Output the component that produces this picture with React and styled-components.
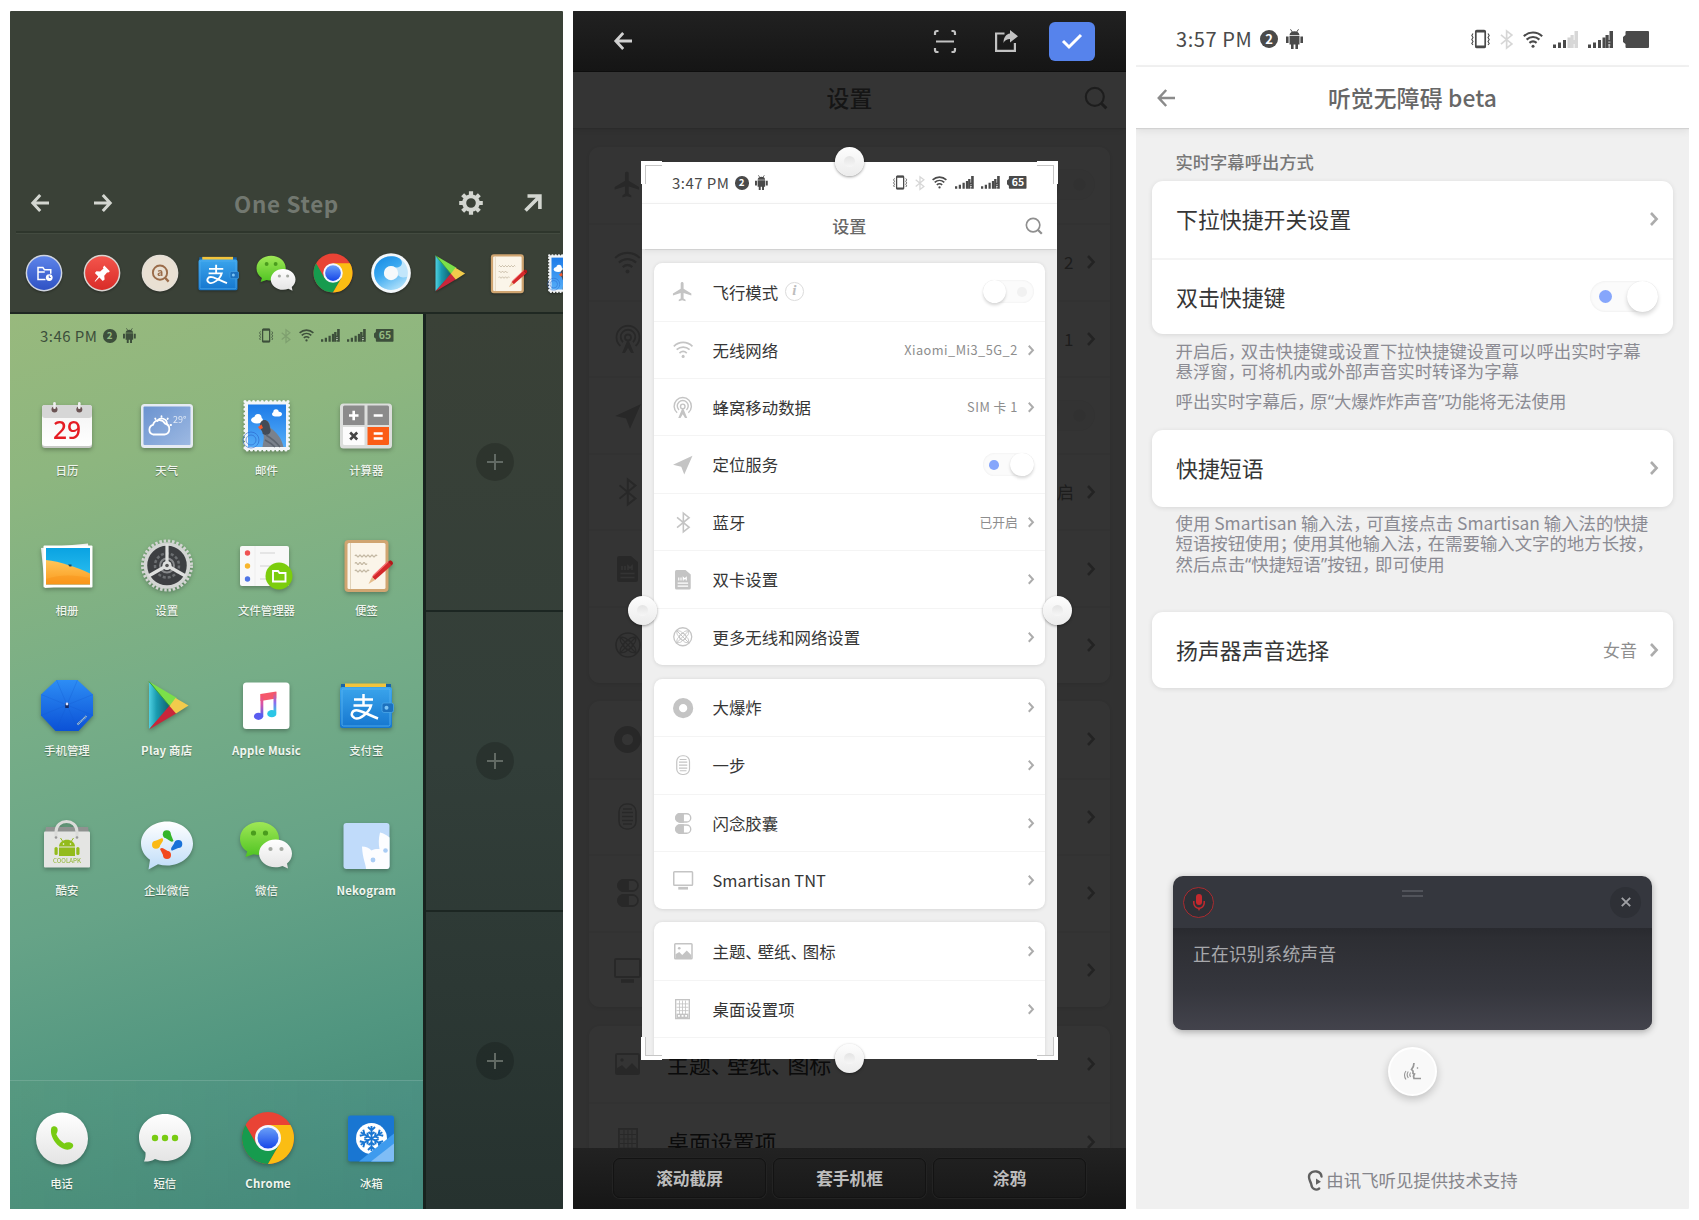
import React from "react";
import styled, { createGlobalStyle, css } from "styled-components";
import { MdFlight } from "react-icons/md";

const Global = createGlobalStyle`
  * { box-sizing: border-box; }
  body { margin: 0; background: #fff; }
  #root { font-family: "Noto Sans CJK SC", "Noto Sans", sans-serif; }
  svg { display: block; flex: none; overflow: visible; }
`;

const Board = styled.main`
  width: 1699px;
  height: 1220px;
  padding: 11px 10px;
  display: flex;
  gap: 10px;
  background: #fff;
  overflow: hidden;
`;

const Phone = styled.section`
  position: relative;
  width: 553px;
  height: 1198px;
  flex: none;
  display: flex;
  flex-direction: column;
  overflow: hidden;
  border-radius: 1px;
  background: ${(p) => p.$bg};
`;

/* ---------- shared text helpers ---------- */

const Tight = styled.span`
  margin-right: -0.25em;
`;
const Quote = styled.span`
  font-family: "Noto Sans", sans-serif;
`;

function Zh({ children }) {
  return children.split(/([，；、“”])/).map((part, i) => {
    if (/^[，；、]$/.test(part)) return <Tight key={i}>{part}</Tight>;
    if (/^[“”]$/.test(part)) return <Quote key={i}>{part}</Quote>;
    return part;
  });
}

/* ---------- status bar ---------- */

const Status = styled.div`
  height: 56px;
  flex: none;
  zoom: ${(p) => p.$zoom || 1};
  display: flex;
  align-items: center;
  padding: 2px 40px 0 40px;
  color: ${(p) => p.$color || "#4a4a4a"};
  ${(p) => p.$line && css`border-bottom: 2px solid #f2f2f2;`}
`;
const Clock = styled.span`
  font-size: 20px;
  line-height: 26px;
  letter-spacing: 0.6px;
  white-space: nowrap;
  width: 84px;
`;
const Count = styled.span`
  width: 18px;
  height: 18px;
  border-radius: 50%;
  background: currentColor;
  display: grid;
  place-items: center;
  margin-right: 8px;
  b {
    font-size: 13px;
    line-height: 18px;
    color: ${(p) => p.$hole || "#fff"};
  }
`;
const Tray = styled.div`
  margin-left: auto;
  display: flex;
  align-items: center;
  gap: 10px;
`;

const Robot = () => (
  <svg width="17" height="20" viewBox="0 0 17 20" fill="currentColor">
    <path d="M3.500 6.200C3.700 1 13.300 1 13.500 6.200zM3.500 7h10v8.500h-10zM0 7.500h2.600V14H0zM14.400 7.500H17V14h-2.600zM5 15h2.600v5H5zM9.400 15H12v5H9.400z" />
    <path d="M4.500.3l2 3M12.500.3l-2 3" stroke="currentColor" />
  </svg>
);
const Vibrate = () => (
  <svg width="19" height="20" viewBox="0 0 19 20" fill="none" stroke="currentColor">
    <rect x="4.800" y="1.500" width="9.400" height="17" rx="1" strokeWidth="1.700" />
    <path d="M5 2.300h9M5 17.700h9" strokeWidth="2.400" />
    <path d="M2 4.500l-1.200 2 1.200 2-1.200 2 1.200 2-1.200 2 1.200 1.500M17 4.500l1.200 2-1.200 2 1.200 2-1.200 2 1.200 2-1.200 1.500" strokeWidth="1.100" />
  </svg>
);
const Bluetooth = ({ size = 18, color = "currentColor", opacity = 1, w = 1.8 }) => (
  <svg width={size * 0.7} height={size} viewBox="0 0 14 20" fill="none" stroke={color} strokeWidth={w} opacity={opacity}>
    <path d="M1 5.2l11.500 9.400L7 19V1l5.500 4.400L1 14.800" />
  </svg>
);
const Wifi = ({ size = 20, w = 2.1 }) => (
  <svg width={size} height={size * 0.85} viewBox="0 0 20 17" fill="none" stroke="currentColor" strokeWidth={w}>
    <path d="M.8 5.200c5.400-5 13-5 18.400 0M3.600 8.600c3.800-3.400 9-3.400 12.800 0M6.400 11.900c2.200-1.900 5-1.900 7.200 0" />
    <circle cx="10" cy="15.200" r="1.500" fill="currentColor" stroke="none" />
  </svg>
);
const Signal = ({ weak }) => (
  <svg width="25" height="17" viewBox="0 0 25 17" fill="currentColor">
    <path d="M0 13.500h3V17H0zM5 11.500h3V17H5zM10 9h3v8h-3z" />
    <path d="M14.500 6.500h3V17h-3z" opacity={weak ? 0.25 : 1} />
    <g opacity={weak ? 0.22 : 1}>
      <path d="M17.500 4h3.200v13h-3.200zM21.500 0H25v17h-3.500zM20 9h3v4h-3z" />
    </g>
    {!weak && <path d="M20.200 10.500h2.200v1.200h-2.200zM20.200 13.400h2.200v1.200h-2.200z" fill="#fff" opacity=".6" />}
  </svg>
);
const Battery = ({ level, hole }) => (
  <svg width="26" height="17" viewBox="0 0 26 17" fill="currentColor">
    <path d="M3.500 0H25q1 0 1 1v15q0 1-1 1H3.500q-1 0-1-1v-3L0 11V6l2.500-2V1q0-1 1-1z" />
    {level && (
      <text x="14.600" y="13.600" fontSize="14" fontWeight="700" textAnchor="middle" fill={hole}>{level}</text>
    )}
  </svg>
);

function StatusBar({ time, level, color, hole = "#fff", zoom, line, weak }) {
  return (
    <Status $color={color} $zoom={zoom} $line={line}>
      <Clock>{time}</Clock>
      <Count $hole={hole}><b>2</b></Count>
      <Robot />
      <Tray>
        <Vibrate />
        <Bluetooth opacity={0.22} size={19} />
        <Wifi />
        <Signal weak={weak} />
        <Signal />
        <Battery level={level} hole={hole} />
      </Tray>
    </Status>
  );
}

/* ---------- small glyphs ---------- */

const Arrow = ({ color, flip, size = 18, w = 3 }) => (
  <svg width={size} height={size} viewBox="0 0 18 18" fill="none" stroke={color} strokeWidth={w} transform={flip ? "scale(-1 1)" : undefined}>
    <path d="M9.200 1L1.800 9l7.400 8M2 9h16" />
  </svg>
);
const ArrowNE = () => (
  <svg width="18" height="18" viewBox="0 0 18 18" fill="none" stroke="#d3d6d0" strokeWidth="3.600">
    <path d="M3.500 2h12.400v13M15.500 2.500L1.500 16.600" />
  </svg>
);
const Cog = () => (
  <svg width="24" height="24" viewBox="-12 -12 24 24" fill="none" stroke="#d3d6d0">
    <circle r="6.800" strokeWidth="4" />
    {[0, 45, 90, 135, 180, 225, 270, 315].map((a) => (
      <path key={a} d="M0 -7.600V-11.800" strokeWidth="4.200" transform={`rotate(${a})`} />
    ))}
  </svg>
);
const Chevron = () => (
  <svg width="8" height="14" viewBox="0 0 8 14" fill="none" stroke="#acacac" strokeWidth="2.600">
    <path d="M1 1l5.600 6L1 13" />
  </svg>
);
const Search = () => (
  <svg width="24" height="24" viewBox="0 0 24 24" fill="none" stroke="#8f8f8f" strokeWidth="2.200">
    <circle cx="10.800" cy="10.800" r="9" />
    <path d="M17 17l5.400 5.400" strokeWidth="3" />
  </svg>
);

/* ---------- application icons (56 × 56 artboard) ---------- */

const Art = ({ size = 56, children }) => (
  <svg width={size} height={size} viewBox="0 0 56 56">{children}</svg>
);

const SharedDefs = styled.svg`
  position: absolute;
`;

const Defs = () => (
  <SharedDefs width="0" height="0" aria-hidden="true">
    <defs>
      <linearGradient id="paper" x1="0" y1="0" x2="0" y2="1"><stop stopColor="#dedede" /><stop offset=".25" stopColor="#f6f6f6" /><stop offset="1" stopColor="#fff" /></linearGradient>
      <linearGradient id="ball" x1="0" y1="0" x2="0" y2="1"><stop stopColor="#fff" /><stop offset="1" stopColor="#e4e4e4" /></linearGradient>
      <linearGradient id="skyA" x1="0" y1="0" x2="1" y2="1"><stop stopColor="#6b93d0" /><stop offset="1" stopColor="#9db9e2" /></linearGradient>
      <linearGradient id="skyB" x1="0" y1="0" x2="0" y2="1"><stop stopColor="#1d7be8" /><stop offset="1" stopColor="#55adf8" /></linearGradient>
      <linearGradient id="sea" x1="0" y1="0" x2="0" y2="1"><stop stopColor="#0aa3e2" /><stop offset="1" stopColor="#32c4f2" /></linearGradient>
      <linearGradient id="sand" x1="0" y1="0" x2="0" y2="1"><stop stopColor="#ffc65a" /><stop offset="1" stopColor="#fb9a1d" /></linearGradient>
      <linearGradient id="wallet" x1="0" y1="0" x2="0" y2="1"><stop stopColor="#3ba5ec" /><stop offset="1" stopColor="#1576cf" /></linearGradient>
      <linearGradient id="lime" x1="0" y1="0" x2="0" y2="1"><stop stopColor="#9fe756" /><stop offset="1" stopColor="#4fc322" /></linearGradient>
      <linearGradient id="umb" x1="0" y1="0" x2="0" y2="1"><stop stopColor="#2d8df5" /><stop offset="1" stopColor="#0b51d6" /></linearGradient>
      <linearGradient id="core" x1="0" y1="0" x2="0" y2="1"><stop stopColor="#6aa0f8" /><stop offset="1" stopColor="#1746e8" /></linearGradient>
      <linearGradient id="teal" x1="0" y1="0" x2="1" y2="0"><stop stopColor="#4fd0e2" /><stop offset=".35" stopColor="#1a9bb0" /><stop offset="1" stopColor="#125a68" /></linearGradient>
      <linearGradient id="note" x1="0" y1="0" x2="0" y2="1"><stop stopColor="#fa5562" /><stop offset=".45" stopColor="#d952a8" /><stop offset="1" stopColor="#4d62f5" /></linearGradient>
      <linearGradient id="note2" x1="0" y1="0" x2="0" y2="1"><stop stopColor="#fa5562" /><stop offset=".5" stopColor="#8a6cf0" /><stop offset="1" stopColor="#2bd0e4" /></linearGradient>
      <linearGradient id="bubble" x1="0" y1="0" x2="0" y2="1"><stop stopColor="#fff" /><stop offset="1" stopColor="#bfdcf8" /></linearGradient>
      <linearGradient id="blueball" x1="0" y1="0" x2="0" y2="1"><stop stopColor="#5d84ea" /><stop offset="1" stopColor="#2f52c4" /></linearGradient>
      <linearGradient id="redball" x1="0" y1="0" x2="0" y2="1"><stop stopColor="#f4554c" /><stop offset="1" stopColor="#d92c28" /></linearGradient>
      <linearGradient id="swirl" x1="0" y1="0" x2=".6" y2="1"><stop stopColor="#1488e2" /><stop offset=".5" stopColor="#3aa8f0" /><stop offset="1" stopColor="#a6dcfa" /></linearGradient>
    </defs>
  </SharedDefs>
);

const CalendarIcon = (p) => (
  <Art {...p}>
    <rect x="3" y="8" width="50" height="43" rx="3" fill="#c9cbc8" />
    <rect x="3" y="8" width="50" height="41" rx="3" fill="url(#paper)" />
    <rect x="3" y="8" width="50" height="13" rx="3" fill="#d6d6d6" />
    {[15.5, 40.3].map((x) => (
      <g key={x}><circle cx={x} cy="12.500" r="3" fill="#6b5454" /><rect x={x - 1.3} y="5" width="2.600" height="7" rx="1.300" fill="#eee" /></g>
    ))}
    <text x="28" y="42" fontSize="24.500" fontWeight="500" fill="#e51c23" textAnchor="middle" fontFamily="Noto Sans">29</text>
  </Art>
);
const WeatherIcon = (p) => (
  <Art {...p}>
    <rect x="2" y="7" width="52" height="44" rx="3.500" fill="#e6ebf3" />
    <rect x="4.500" y="9.500" width="47" height="38.500" rx="1" fill="url(#skyA)" />
    <g fill="none" stroke="#fff" strokeWidth="1.800" strokeLinecap="round">
      <path d="M14 37.500a5 5 0 0 1 0-9.600 6.500 6.500 0 0 1 12-1.400 5.600 5.600 0 0 1-.5 11z" />
      <path d="M18.500 24a5 5 0 0 1 9.300 3" />
      <path d="M22.500 19.200v.6M16.200 21.500l.3.5M28.800 21.500l-.3.5M31.500 28h.6" />
    </g>
    <text x="34" y="26" fontSize="9" fill="#fff" opacity=".75">29°</text>
  </Art>
);
const MailIcon = (p) => (
  <Art {...p}>
    <rect x="7" y="4.500" width="43.500" height="48.500" fill="#f3f5f7" />
    <rect x="7" y="4.500" width="43.500" height="48.500" fill="none" stroke="#f3f5f7" strokeWidth="3.200" strokeDasharray="0 4.300" strokeLinecap="round" />
    <rect x="10" y="7.500" width="38" height="42.500" fill="url(#skyB)" />
    <g fill="#fff"><ellipse cx="19" cy="23" rx="6" ry="3.500" /><circle cx="20" cy="20.500" r="3.500" /><ellipse cx="39" cy="17" rx="5" ry="2.600" /><circle cx="38" cy="15" r="2.700" /></g>
    <path d="M23 30c0-4 1-6.500 4-6.500 4 0 5 3 5.500 7.500 6 4 11 10 13 19H24.500c1-6 2-10 .5-14-1-2-2-3-2-6z" fill="#7a818c" />
    <path d="M22 29c0-4 2-6 4.500-6s5 2.500 5.500 8c1 2 1 4-1 6-3 1.500-5 1-6.500-.5C25 34 22 33 22 29z" fill="#434b57" />
    <path d="M20 30l3.500-2.500L25 31l-3 1.500z" fill="#f4582b" />
    <path d="M28 38c5 3 10 7 14 12M27 43c4 2 7 4 10 7" stroke="#5d646f" strokeWidth="1.500" fill="none" />
    <g fill="none" stroke="#2a62c8" opacity=".6"><circle cx="13" cy="43" r="8" /><circle cx="13" cy="43" r="5" /></g>
  </Art>
);
const CalcIcon = (p) => (
  <Art {...p}>
    <rect x="2" y="6.500" width="52" height="45" rx="3.500" fill="#dcdedc" />
    <path d="M5 10q0-1.500 1.500-1.500h20V28H5z" fill="#8b8b8b" /><path d="M29.500 8.500h20q1.500 0 1.500 1.500v18H29.500z" fill="#8b8b8b" />
    <path d="M5 30h21.500v18H6.500Q5 48 5 46.500z" fill="#fcfcfc" /><path d="M29.500 30H51v16.500q0 1.500-1.500 1.500h-20z" fill="#fb5c16" />
    <g strokeWidth="2.600" stroke="#fff"><path d="M11 18.500h9.500M15.700 13.700v9.500M35.700 18.500h9M35.700 36.500h9M35.700 41.500h9" /><path d="M12.200 35.500l7 7M19.200 35.500l-7 7" stroke="#444" /></g>
  </Art>
);
const GalleryIcon = (p) => (
  <Art {...p}>
    <path d="M2 11l47-4.500 4 39L6 51z" fill="#f0f0ee" />
    <rect x="4.500" y="8.500" width="49" height="42" fill="#fff" rx="1" />
    <rect x="7" y="11" width="44" height="36.500" fill="url(#sea)" />
    <path d="M7 23c14 1.500 30 7 44 13.500v11H7z" fill="url(#sand)" />
    <path d="M7 42c15-5 30-4 44-1v6.500H7z" fill="#f78c14" opacity=".35" />
    <path d="M29 27.500h3.500v2h-2z" fill="#1b4a63" />
  </Art>
);
const SettingsIcon = (p) => (
  <Art {...p}>
    <circle cx="28" cy="28.500" r="24.500" fill="none" stroke="#d3d5d3" strokeWidth="3" strokeDasharray="2.500 1.780" />
    <circle cx="28" cy="28.500" r="21.500" fill="#3d3f42" stroke="#d3d5d3" strokeWidth="3.500" />
    <circle cx="28" cy="28.500" r="12" fill="none" stroke="#6c6f72" strokeWidth="2.500" strokeDasharray="3 2" />
    <circle cx="28" cy="28.500" r="7" fill="none" stroke="#87898b" strokeWidth="2" />
    <path d="M28 28.500V7M28 28.500l18.500 10.500M28 28.500L9.500 39" stroke="#dedfde" strokeWidth="3.200" />
    <circle cx="28" cy="28.500" r="4.600" fill="#dedfde" /><circle cx="28" cy="28.500" r="1.800" fill="#555" />
  </Art>
);
const FilesIcon = (p) => (
  <Art {...p}>
    <rect x="2" y="9" width="49" height="40" rx="2" fill="#f8f8f8" /><path d="M17 9v40" stroke="#eee" />
    <circle cx="9.500" cy="16" r="2.700" fill="#f05353" /><circle cx="9.500" cy="29" r="2.700" fill="#f8b62d" /><circle cx="9.500" cy="42" r="2.700" fill="#4e75e6" />
    <path d="M22 16h15M22 29h12M22 42h6" stroke="#dedede" strokeWidth="1.500" />
    <circle cx="41" cy="39" r="13.500" fill="#7ccd0d" />
    <path d="M35 34h5l1.500 2h6v8.500H35z" fill="none" stroke="#fff" strokeWidth="1.900" />
  </Art>
);
const NotesIcon = (p) => (
  <Art {...p}>
    <rect x="6.500" y="3" width="44" height="52" rx="4" fill="#d0a571" />
    <rect x="9.500" y="6" width="38" height="46" rx="1.500" fill="#fbf5e9" /><path d="M12.500 6v46" stroke="#e0d2b8" />
    <path d="M17 19q1-2 2 0t2 0 2 0 2 0 2 0 2 0 2 0 2 0 2 0 2 0 2 0M17 26.500q1-2 2 0t2 0 2 0 2 0 2 0 2 0M17 34q1-2 2 0t2 0 2 0 2 0 2 0 2 0 2 0" stroke="#bfb39d" strokeWidth="1.200" fill="none" />
    <path d="M34 40l16-15 3.500 3.500L37 43z" fill="#d5292b" /><path d="M35 39l15-14.200" stroke="#f4696b" strokeWidth="1.300" /><path d="M34 40l3 3-6.500 4z" fill="#e5bd8c" />
    <path d="M50 25l2-1.800q3 .5 3 3.500l-1.500 1.800z" fill="#b51719" />
  </Art>
);
const UmbrellaIcon = (p) => (
  <Art {...p}>
    <path d="M17.500 3h21L54 17.500v21L39.500 54h-23L2 38.500v-21z" fill="url(#umb)" />
    <path d="M28 28L17.500 3M28 28L38.500 3M28 28l26-10.500M28 28l26 10.500M28 28l11.500 26M28 28L16.500 54M28 28L2 38.500M28 28L2 17.500" stroke="#1459cf" strokeWidth=".7" opacity=".4" />
    <path d="M28 26v5" stroke="#152a66" strokeWidth="3.500" /><circle cx="28" cy="27" r="1.400" fill="#dfe8ff" />
    <path d="M38.500 47.500l9-8.500" stroke="#b6c7c4" strokeWidth="2" strokeDasharray="1 .6" />
  </Art>
);
const PlayIcon = (p) => (
  <Art {...p}>
    <path d="M10 5v47l22-23z" fill="url(#teal)" />
    <path d="M10 4.500L38 21l-7 8.500z" fill="#7be04a" /><path d="M10 4.500l21 25" stroke="#3f9f3b" strokeWidth="1" />
    <path d="M10 52.500L38 36l-7-8z" fill="#c9263b" />
    <path d="M36.500 21L49.500 28.500 37 36.500 30.500 29z" fill="#f2cb4c" />
  </Art>
);
const MusicIcon = (p) => (
  <Art {...p}>
    <rect x="5" y="5.500" width="46.500" height="46.500" rx="3.500" fill="#fff" />
    <path d="M22.500 17L38.300 14.500V21.500l-15.800 2.500z" fill="#f5586c" />
    <rect x="22.500" y="17" width="2.800" height="22.500" fill="url(#note)" />
    <rect x="35.500" y="15" width="2.800" height="21" fill="url(#note2)" />
    <ellipse cx="20.500" cy="39.300" rx="4.600" ry="3.600" fill="#5a5df0" /><ellipse cx="33.800" cy="36.700" rx="4.600" ry="3.600" fill="#2bc6e6" />
  </Art>
);
const AlipayIcon = (p) => (
  <Art {...p}>
    <path d="M3 7h50v6H3z" fill="#1a64a8" /><path d="M7 6.500h41v6H7z" fill="#f2c43c" />
    <rect x="2" y="10" width="52" height="41" rx="2.500" fill="url(#wallet)" />
    <rect x="4" y="12" width="48" height="37" rx="1.500" fill="none" stroke="#58b4f2" strokeWidth=".8" />
    <path d="M16 22.500h19M25.500 17v11M15.500 28.500h17.500C31 36 21 43.500 16.500 41c-5-3-2.500-8.500 3.500-7.500 5 1 11 4.500 20 8" fill="none" stroke="#fff" strokeWidth="2.500" />
    <rect x="44" y="26" width="11.500" height="9.500" rx="2" fill="#1c71bf" stroke="#4aa7e8" strokeWidth=".8" /><circle cx="48.500" cy="30.700" r="2" fill="#7cc4f5" />
  </Art>
);
const CoolapkIcon = (p) => (
  <Art {...p}>
    <path d="M7 10h42l1 6H6z" fill="#8f9290" /><rect x="5" y="14.500" width="46" height="36" rx="1" fill="#e4e5e3" />
    <path d="M17 20.500V15c0-14 21-14 21 0v5.500" fill="none" stroke="#dadbd9" strokeWidth="3" />
    <circle cx="17" cy="20.500" r="1.300" fill="#999" /><circle cx="38" cy="20.500" r="1.300" fill="#999" />
    <g fill="#93bb1c"><path d="M20 29.500c.5-9 15.500-9 16 0z" /><rect x="20" y="30.500" width="16" height="8.500" /><rect x="15.500" y="30" width="3.200" height="8" rx="1.600" /><rect x="37.300" y="30" width="3.200" height="8" rx="1.600" /></g>
    <path d="M21.500 21l2 3M34.500 21l-2 3" stroke="#93bb1c" /><circle cx="24.500" cy="27" r=".8" fill="#fff" /><circle cx="31.500" cy="27" r=".8" fill="#fff" />
    <text x="28" y="46" fontSize="6.600" textLength="28" lengthAdjust="spacingAndGlyphs" fill="#8db32a" fontWeight="400" textAnchor="middle">COOLAPK</text>
  </Art>
);
const WeComIcon = (p) => (
  <Art {...p}>
    <path d="M28 4.500c14.500 0 26 9.800 26 22S42.500 48.500 28 48.500c-3 0-6-.4-9-1.300L9.500 52.500l1.500-9.700C5.500 39 2 33 2 26.500c0-12.200 11.500-22 26-22z" fill="url(#bubble)" />
    <g fill="#35b52a"><circle cx="27.800" cy="17.300" r="4" /><path d="M25 20l6.500-3.500 3 7.500q-1.500 1.200-3 .3z" /></g>
    <g fill="#1a72d9"><circle cx="39.300" cy="27" r="4" /><path d="M36.500 24.200l3.300 6.600-7 3q-1.300-1.500-.5-3z" /></g>
    <g fill="#f2481d"><circle cx="28" cy="38" r="4" /><path d="M31 35.200L24.500 39l-3.500-7q1.500-1.500 3-.7z" /></g>
    <g fill="#fbb915"><circle cx="17" cy="27.800" r="4" /><path d="M19.800 30.600L16.200 24l7-3q1.500 1.500.7 3z" /></g>
  </Art>
);
const WeChatIcon = (p) => (
  <Art {...p}>
    <path d="M21.500 5C32 5 41 12 41 21.500S32 38 21.500 38c-2 0-4-.3-6-.8L7.500 40l1.700-5.500C4.500 31.500 2 27 2 21.500 2 12 11 5 21.500 5z" fill="url(#lime)" />
    <circle cx="15.500" cy="16" r="2.600" fill="#4a9c1e" /><circle cx="27.500" cy="16" r="2.600" fill="#4a9c1e" />
    <path d="M37.500 22.500c9 0 16.500 6.200 16.500 14 0 4.200-2 7.500-5 10l1 5-5.500-2.500c-2 .8-4.500 1.300-7 1.300-9 0-16.500-6.200-16.500-13.800s7.500-14 16.500-14z" fill="url(#ball)" />
    <circle cx="32.500" cy="32" r="2.100" fill="#a5aaa2" /><circle cx="43.500" cy="32" r="2.100" fill="#a5aaa2" />
  </Art>
);
const NekoIcon = (p) => (
  <Art {...p}>
    <rect x="5.500" y="6" width="46" height="46" rx="3" fill="#c0dbfa" />
    <path d="M28 52c0-5-3.500-10-4-22.500 4 0 7 1.500 9.500 4 3-1.500 5-1.800 8-1.500-1-5-1-10 .5-16.500 4 1 6.500 2.500 9.500 5V49q0 3-3 3z" fill="#fcfdff" />
    <circle cx="35" cy="43" r="2.400" fill="#aacdf5" /><circle cx="47.500" cy="33.500" r="2.300" fill="#aacdf5" />
  </Art>
);
const PhoneIcon = (p) => (
  <Art {...p}>
    <circle cx="28" cy="28.500" r="26" fill="url(#ball)" />
    <path d="M18 17c2-2 5.500-1.500 6 1.500.3 2-.3 3.500-1.500 5.500 1.500 4 4 7 7.500 9.500 2-1 4-1.300 6-.5 3.500 1.300 3.500 4 1.500 5.500-4 3-10 1-14.500-4S16 22 18 17z" fill="#78cb12" transform="rotate(-3 28 28)" />
  </Art>
);
const SmsIcon = (p) => (
  <Art {...p}>
    <path d="M28 4c14.500 0 26 10.500 26 23.500S42.500 51 28 51c-4 0-7-.8-10-2-3 2-7 2.700-11 2.500 1.500-3 1.700-6 1.500-9C4.500 39 2 33.500 2 27.500 2 14.500 13.500 4 28 4z" fill="url(#ball)" />
    <g fill="#78cb12"><circle cx="18" cy="28" r="3.200" /><circle cx="28" cy="28" r="3.200" /><circle cx="38" cy="28" r="3.200" /></g>
  </Art>
);
const ChromeIcon = (p) => (
  <Art {...p}>
    <circle cx="28" cy="28" r="26" fill="#e94335" />
    <path d="M5.500 15A26 26 0 0 0 28 54l11.300-19.500L28 28 16.700 34.500z" fill="#169b4e" />
    <path d="M28 54a26 26 0 0 0 22.500-39H28l11.300 19.500z" fill="#fbbd13" />
    <circle cx="28" cy="28" r="13" fill="#f5f7ff" /><circle cx="28" cy="28" r="10.500" fill="url(#core)" />
  </Art>
);
const FridgeIcon = (p) => (
  <Art {...p}>
    <rect x="5" y="5.500" width="46" height="46" rx="2.500" fill="#1976d2" />
    <circle cx="28.500" cy="28.500" r="15.500" fill="#fff" />
    <g stroke="#1976d2" strokeWidth="1.900" fill="none" transform="translate(28.500 28.500)">
      {[0, 60, 120, 180, 240, 300].map((a) => <path key={a} d="M0 0V-12.500M-3.500 -11.500L0 -8l3.500 -3.500M-3 -6.500L0 -4l3 -2.500" transform={`rotate(${a})`} />)}
    </g>
    <path d="M16 51.500l35-28v28z" fill="#3e9bee" /><path d="M28 51.500l23-18V49q0 2.500-2.500 2.500z" fill="#7fbdf6" />
  </Art>
);
const ShotIcon = (p) => (
  <Art {...p}>
    <circle cx="28" cy="28" r="24.500" fill="#cfd4e0" /><circle cx="28" cy="28" r="22.500" fill="url(#blueball)" />
    <path d="M30 36.500H20V20.500h6.500l2 3H37V29M20 26.500h9" fill="none" stroke="#fff" strokeWidth="2" /><circle cx="35" cy="34" r="4.500" fill="#fff" /><path d="M35 31.500V34h2" stroke="#3d61d0" strokeWidth="1.300" fill="none" />
  </Art>
);
const PinIcon = (p) => (
  <Art {...p}>
    <circle cx="28" cy="28" r="24.500" fill="#d9d4d0" /><circle cx="28" cy="28" r="22.500" fill="url(#redball)" />
    <path d="M31 18l7.500 7.500-2.500 2-1-.5-4 4.500.5 5-2.500 2-4.500-4.500-6 6 0-1.500 4.500-6-4.500-4.500 2-2.500 5 .5 4.500-4-.8-1.500z" fill="#fff" />
  </Art>
);
const LookupIcon = (p) => (
  <Art {...p}>
    <circle cx="28" cy="28" r="24.500" fill="#e5dfd6" /><circle cx="28" cy="28" r="22" fill="#e9e0d3" />
    <circle cx="28" cy="27.500" r="9.500" fill="none" stroke="#9a6b49" strokeWidth="2.500" /><path d="M34.500 34l5 5.500" stroke="#9a6b49" strokeWidth="3" />
    <text x="28" y="32.200" fontSize="14" fontWeight="700" textAnchor="middle" fill="#9a6b49">a</text>
  </Art>
);
const BrowserIcon = (p) => (
  <Art {...p}>
    <circle cx="28" cy="28" r="26.500" fill="#f4f8fb" />
    <circle cx="28" cy="28" r="22.500" fill="#c2e6fb" />
    <path d="M28 5.500c7 0 14 2.500 14.500 8 .5 5-4 7.500-9 7-2-1-3.500-1.500-5.500-1.500a9 9 0 0 0 0 18c5 0 8-3 9.500-6 4 4 8 3 12 2C47.500 43 39 50.500 28 50.500a22.500 22.500 0 0 1 0-45z" fill="url(#swirl)" />
    <circle cx="28" cy="28" r="9.500" fill="#f6f9fb" />
  </Art>
);

/* ---------- panel one: One Step launcher ---------- */

const StepBar = styled.header`
  height: 222px;
  margin: 0 3px 0 6px;
  padding: 163px 18px 0 15px;
  display: grid;
  grid-template-columns: 1fr auto 1fr;
  align-items: center;
  border-bottom: 2px solid #2e362c;
  box-shadow: 0 1px 0 #434b40;
`;
const IconGroup = styled.div`
  display: flex;
  align-items: center;
  justify-content: ${(p) => (p.$end ? "flex-end" : "flex-start")};
  gap: ${(p) => p.$gap}px;
`;
const StepTitle = styled.h1`
  margin: 0;
  font: 700 22.400px/28px "Noto Sans CJK SC", sans-serif;
  letter-spacing: 0.7px;
  color: #727870;
`;
const Strip = styled.div`
  height: 79px;
  flex: none;
  display: flex;
  align-items: center;
  padding-left: 5px;
  overflow: hidden;
`;
const StripSlot = styled.div`
  width: 57.900px;
  flex: none;
  display: flex;
  justify-content: center;
  svg { filter: drop-shadow(0 1px 1px rgba(0, 0, 0, 0.35)); }
`;
const StepBody = styled.div`
  flex: 1;
  display: flex;
  border-top: 2px solid #1f2822;
`;
const Launcher = styled.div`
  width: 413px;
  display: flex;
  flex-direction: column;
  background: linear-gradient(164deg, #98b97d 0%, #8db67f 17%, #76ad87 42%, #66a387 62%, #519680 80%, #3f8474 100%);
`;
const AppGrid = styled.div`
  flex: 1;
  padding: 41px 0 0 7px;
  display: grid;
  grid-template-columns: repeat(4, 99.800px);
  grid-auto-rows: 140px;
  align-content: start;
`;
const Dock = styled.div`
  height: 129px;
  padding-top: 29px;
  display: grid;
  grid-template-columns: repeat(4, 1fr);
  border-top: 1px solid rgba(255, 255, 255, 0.14);
  background: linear-gradient(90deg, rgba(90, 150, 120, 0.18), rgba(80, 150, 150, 0.25));
`;
const AppCell = styled.div`
  display: flex;
  flex-direction: column;
  align-items: center;
  gap: 9px;
  svg { filter: drop-shadow(0 2px 2px rgba(0, 0, 0, 0.28)); }
`;
const AppLabel = styled.span`
  font-size: 11.400px;
  line-height: 16px;
  font-weight: ${(p) => (p.$latin ? 700 : 500)};
  white-space: nowrap;
  letter-spacing: ${(p) => (p.$latin ? "0.2px" : "0")};
  color: #f0f6ef;
  text-shadow: 0 1px 1px rgba(0, 0, 0, 0.35);
`;
const Side = styled.div`
  flex: 1;
  display: grid;
  grid-template-rows: 298px 300px 1fr;
  border-left: 3px solid #18231f;
  background: linear-gradient(180deg, #3a4137 0%, #323e39 50%, #26322f 100%);
`;
const SideCell = styled.div`
  display: grid;
  place-items: center;
  border-bottom: ${(p) => (p.$last ? "0" : "2px solid #1c2622")};
`;
const Plus = styled.span`
  width: 38px;
  height: 38px;
  border-radius: 50%;
  background: rgba(0, 0, 0, 0.18);
  display: grid;
  place-items: center;
`;

const stripApps = [ShotIcon, PinIcon, LookupIcon, AlipayIcon, WeChatIcon, ChromeIcon, BrowserIcon, PlayIcon, NotesIcon, MailIcon];
const apps = [
  ["日历", CalendarIcon], ["天气", WeatherIcon], ["邮件", MailIcon], ["计算器", CalcIcon],
  ["相册", GalleryIcon], ["设置", SettingsIcon], ["文件管理器", FilesIcon], ["便签", NotesIcon],
  ["手机管理", UmbrellaIcon], ["Play 商店", PlayIcon], ["Apple Music", MusicIcon], ["支付宝", AlipayIcon],
  ["酷安", CoolapkIcon], ["企业微信", WeComIcon], ["微信", WeChatIcon], ["Nekogram", NekoIcon],
];
const dockApps = [["电话", PhoneIcon], ["短信", SmsIcon], ["Chrome", ChromeIcon], ["冰箱", FridgeIcon]];

const AppItem = ({ name, Icon }) => (
  <AppCell>
    <Icon />
    <AppLabel $latin={/[a-z]/.test(name)}>{name}</AppLabel>
  </AppCell>
);

function OneStep() {
  return (
    <Phone $bg="#3a4137">
      <StepBar>
        <IconGroup $gap={45}>
          <Arrow color="#d3d6d0" />
          <Arrow color="#d3d6d0" flip />
        </IconGroup>
        <StepTitle>One Step</StepTitle>
        <IconGroup $gap={41} $end>
          <Cog />
          <ArrowNE />
        </IconGroup>
      </StepBar>
      <Strip>
        {stripApps.map((Icon, i) => (
          <StripSlot key={i}><Icon size={42} /></StripSlot>
        ))}
      </Strip>
      <StepBody>
        <Launcher>
          <StatusBar time="3:46 PM" level="65" zoom={0.75} color="#3d4f3b" hole="#94ba80" />
          <AppGrid>{apps.map(([n, I]) => <AppItem key={n} name={n} Icon={I} />)}</AppGrid>
          <Dock>{dockApps.map(([n, I]) => <AppItem key={n} name={n} Icon={I} />)}</Dock>
        </Launcher>
        <Side>
          {[0, 1, 2].map((i) => (
            <SideCell key={i} $last={i === 2}>
              <Plus>
                <svg width="16" height="16" viewBox="0 0 16 16" stroke="#626a64" strokeWidth="2"><path d="M8 0v16M0 8h16" /></svg>
              </Plus>
            </SideCell>
          ))}
        </Side>
      </StepBody>
    </Phone>
  );
}

/* ---------- shared settings widgets ---------- */

const Head = styled.header`
  height: 61px;
  flex: none;
  display: grid;
  grid-template-columns: 60px 1fr 60px;
  align-items: center;
  justify-items: center;
  background: #fff;
  position: relative;
  box-shadow: 0 1px 1px #d2d2d2, 0 3px 8px rgba(0, 0, 0, 0.07);
`;
const HeadTitle = styled.h2`
  margin: 0;
  font-size: 22.800px;
  line-height: 32px;
  letter-spacing: 0.15px;
  font-weight: 500;
  color: #676767;
  white-space: nowrap;
`;
const Card = styled.div`
  width: 521px;
  flex: none;
  border-radius: 11px;
  background: #fff;
  box-shadow: 0 1px 5px rgba(0, 0, 0, 0.1);
`;
const Row = styled.div`
  height: 76.600px;
  display: flex;
  align-items: center;
  padding: 0 15px 0 24px;
  font-size: 21.900px;
  line-height: 30px;
  color: #363636;
  white-space: nowrap;
  & + & { border-top: 2px solid #f4f4f4; }
`;
const RowIcon = styled.span`
  width: 54px;
  height: 28px;
  display: flex;
  align-items: center;
  color: #c4c4c4;
`;
const IconCell = styled.span`
  width: 29px;
  display: flex;
  justify-content: center;
`;
const Value = styled.span`
  margin-left: auto;
  display: flex;
  align-items: center;
  gap: 13px;
  font-size: 17px;
  letter-spacing: ${(p) => (p.$latin ? "0.65px" : "0")};
  color: #8d8d8d;
`;
const Info = styled.i`
  width: 25px;
  height: 25px;
  flex: none;
  margin-left: 9px;
  border: 1.800px solid #dcdcdc;
  border-radius: 50%;
  font: italic 700 20px/20px "Liberation Serif", serif;
  text-align: center;
  color: #bdbdbd;
`;
const Track = styled.span`
  width: 68px;
  height: 31px;
  margin-left: auto;
  border-radius: 16px;
  display: flex;
  align-items: center;
  justify-content: space-between;
  flex-direction: ${(p) => (p.$on ? "row" : "row-reverse")};
  background: #fbfbfb;
  box-shadow: inset 0 0 3px rgba(0, 0, 0, 0.08);
`;
const Dot = styled.span`
  width: 13px;
  height: 13px;
  margin: 0 9px;
  border-radius: 50%;
  background: ${(p) => (p.$on ? "#86a6fb" : "#f1f1f1")};
`;
const Knob = styled.span`
  width: 31px;
  height: 31px;
  border-radius: 50%;
  background: #fff;
  box-shadow: 0 3px 4px rgba(0, 0, 0, 0.15), 0 0 1px rgba(0, 0, 0, 0.1);
`;
const Toggle = ({ on }) => (
  <Track $on={on}><Dot $on={on} /><Knob /></Track>
);

/* ---------- panel two: settings page in the screenshot editor ---------- */

const Page = styled.div`
  width: 553px;
  height: 1198px;
  flex: none;
  zoom: ${(p) => p.$zoom || 1};
  display: flex;
  flex-direction: column;
  overflow: hidden;
  background: #fff;
`;
const List = styled.div`
  flex: 1;
  padding: 18.500px 16px 0;
  display: flex;
  flex-direction: column;
  gap: 18.300px;
  background: #efefef;
`;
const StatusGap = styled.div`
  height: 56px;
  flex: none;
`;

const glyphs = {
  plane: <MdFlight size={31} />,
  wifi: <Wifi size={27} w={1.7} />,
  tower: (
    <svg width="26" height="28" viewBox="0 0 26 28" fill="none" stroke="currentColor" strokeWidth="1.900">
      <path d="M5.500 21a11.500 11.500 0 1 1 15 0M8 17.300a7.300 7.300 0 1 1 10 0" /><circle cx="13" cy="12.500" r="3" />
      <path d="M12 16L7 28h3l3-5 3 5h3l-5-12z" fill="currentColor" stroke="none" />
    </svg>
  ),
  nav: <svg width="26" height="26" viewBox="0 0 26 26" fill="currentColor"><path d="M26 1L0 13l11 2.500L15 26z" /></svg>,
  bt: <Bluetooth size={28} w={1.500} />,
  sim: (
    <svg width="21" height="26" viewBox="0 0 21 26"><path d="M2 0h12l7 6v18q0 2-2 2H2q-2 0-2-2V2q0-2 2-2z" fill="currentColor" /><path d="M5 10v4M8 10v4M11 14v-4l2 2 2-2v4M3.500 17.500h14M3.500 21.500h14" stroke="#fff" strokeWidth="1.500" fill="none" /></svg>
  ),
  net: (
    <svg width="26" height="26" viewBox="0 0 26 26" fill="none" stroke="currentColor" strokeWidth="1.700"><circle cx="13" cy="13" r="12" /><rect x="9" y="9" width="8" height="8" rx="2.500" transform="rotate(45 13 13)" /><path d="M4.500 4.500l17 17M21.500 4.500l-17 17M5 5c6 0 7 2 8 3.500C14 7 15 5 21 5M5 21c6 0 7-2 8-3.500 1 1.500 2 3.500 8 3.500M5 5c0 6 2 7 3.500 8C7 14 5 15 5 21M21 5c0 6-2 7-3.500 8 1.500 1 3.500 2 3.500 8" strokeWidth="1.300" /></svg>
  ),
  bang: <svg width="27" height="27" viewBox="0 0 27 27"><circle cx="13.500" cy="13.500" r="9.500" fill="none" stroke="currentColor" strokeWidth="8" /></svg>,
  step: (
    <svg width="19" height="27" viewBox="0 0 19 27" fill="none" stroke="currentColor" strokeWidth="1.600"><rect x="1" y="1" width="17" height="25" rx="7.500" /><path d="M5 6h9M4 9.500h11M4 13.500h11M4 17.500h11M5 21h9" /></svg>
  ),
  pills: (
    <svg width="22" height="28" viewBox="0 0 22 28" fill="none" stroke="currentColor" strokeWidth="1.800"><rect x="1" y="1" width="20" height="11" rx="5.500" /><rect x="1" y="16" width="20" height="11" rx="5.500" /><path d="M11 1H6.500a5.500 5.500 0 0 0 0 11H11zM11 16H6.500a5.500 5.500 0 0 0 0 11H11z" fill="currentColor" /></svg>
  ),
  tnt: <svg width="27" height="25" viewBox="0 0 27 25" fill="none" stroke="currentColor"><rect x="1" y="1" width="25" height="18" rx="1" strokeWidth="2" /><path d="M7 23h13" strokeWidth="3.600" /></svg>,
  pic: (
    <svg width="25" height="22" viewBox="0 0 25 22"><rect x="1" y="1" width="23" height="20" rx="1" fill="none" stroke="currentColor" strokeWidth="2" /><path d="M2 20v-5l5-3 4 4 6-6 6 6v4z" fill="currentColor" /><circle cx="7" cy="7" r="1.800" fill="currentColor" /></svg>
  ),
  grid: (
    <svg width="20" height="27" viewBox="0 0 20 27"><rect x=".9" y=".9" width="18.200" height="25.200" fill="none" stroke="currentColor" strokeWidth="1.800" /><path d="M6 2v23M10 2v23M14 2v23M2 6.500h16M2 11h16M2 15.500h16" stroke="currentColor" strokeWidth="1.100" /><path d="M2 19.500h16V26H2z" fill="currentColor" /><path d="M4 22.500h2.500M8.800 22.500h2.500M13.500 22.500H16" stroke="#fff" strokeWidth="2.200" /></svg>
  ),
};

/* `edge` is the end of a value that stays in sight beside the crop frame */
const groups = [
  [
    { icon: "plane", label: "飞行模式", info: true, toggle: "off" },
    { icon: "wifi", label: "无线网络", value: "Xiaomi_Mi3_5G_2", edge: "2" },
    { icon: "tower", label: "蜂窝移动数据", value: "SIM 卡 1", edge: "1" },
    { icon: "nav", label: "定位服务", toggle: "on" },
    { icon: "bt", label: "蓝牙", value: "已开启", edge: "启" },
    { icon: "sim", label: "双卡设置" },
    { icon: "net", label: "更多无线和网络设置" },
  ],
  [
    { icon: "bang", label: "大爆炸" },
    { icon: "step", label: "一步" },
    { icon: "pills", label: "闪念胶囊" },
    { icon: "tnt", label: "Smartisan TNT" },
  ],
  [
    { icon: "pic", label: "主题、壁纸、图标", below: true },
    { icon: "grid", label: "桌面设置项", below: true },
    { blank: true },
  ],
];

const SettingsPage = ({ zoom, backdrop }) => (
  <Page $zoom={zoom}>
    {backdrop ? <StatusGap /> : <StatusBar time="3:47 PM" level="65" line />}
    <Head>
      <span />
      <HeadTitle>设置</HeadTitle>
      <Search />
    </Head>
    <List>
      {groups.map((rows, g) => (
        <Card key={g}>
          {rows.map((r, i) =>
            r.blank ? <Row key={i} /> : (
              <Row key={i}>
                <RowIcon><IconCell>{glyphs[r.icon]}</IconCell></RowIcon>
                {(!backdrop || r.below) && <span><Zh>{r.label}</Zh></span>}
                {r.info && !backdrop && <Info>i</Info>}
                {r.toggle ? <Toggle on={r.toggle === "on" && !backdrop} /> : (
                  <Value $latin={/[A-Z]/.test(r.value || "")}>{backdrop ? r.edge : r.value}<Chevron /></Value>
                )}
              </Row>
            )
          )}
        </Card>
      ))}
    </List>
  </Page>
);

const Shade = styled.div`
  position: absolute;
  inset: 0;
  background: rgba(0, 0, 0, 0.795);
  display: flex;
  flex-direction: column;
  justify-content: space-between;
`;
const EditTop = styled.div`
  height: 61px;
  padding: 0 31px 0 41px;
  display: flex;
  align-items: center;
  background: linear-gradient(#212121, #151515);
  border-bottom: 1px solid #0e0e0e;
`;
const EditTools = styled.div`
  margin-left: auto;
  display: flex;
  align-items: center;
  gap: 39px;
`;
const Done = styled.span`
  width: 46px;
  height: 39px;
  margin-left: -8px;
  display: grid;
  place-items: center;
  border-radius: 6px;
  background: #5683ec;
`;
const EditBottom = styled.div`
  height: 61px;
  padding: 10px 40px 11px;
  display: grid;
  grid-template-columns: repeat(3, 1fr);
  gap: 7px;
  background: linear-gradient(#222, #161616);
`;
const EditButton = styled.button`
  padding: 0;
  border: 1px solid #131313;
  border-radius: 7px;
  box-shadow: 0 0 0 1px #232323;
  background: linear-gradient(#202020, #191919);
  font: 700 16.700px/24px "Noto Sans CJK SC", sans-serif;
  color: #bdbdbd;
`;
const Crop = styled.div`
  position: absolute;
  left: 69px;
  top: 150.500px;
  width: 415px;
  height: 897px;
  background: #fff;
`;
const CropView = styled.div`
  height: 897px;
  overflow: hidden;
`;
const Corner = styled.span`
  position: absolute;
  width: 21px;
  height: 23px;
  ${(p) => p.$v}: -1px;
  ${(p) => p.$h}: -1px;
  border: 0 solid #fff;
  border-${(p) => p.$v}-width: 4px;
  border-${(p) => p.$h}-width: 4px;
  &::after {
    content: "";
    position: absolute;
    inset: 0;
    border: 0 solid #c6c6c6;
    border-${(p) => p.$v}-width: 1.500px;
    border-${(p) => p.$h}-width: 1.500px;
  }
`;
const Handle = styled.span`
  position: absolute;
  left: ${(p) => p.$x};
  top: ${(p) => p.$y};
  width: 29px;
  height: 29px;
  margin: -14.500px;
  border-radius: 50%;
  display: grid;
  place-items: center;
  background: linear-gradient(#fdfdfd, #ececec);
  box-shadow: 0 1px 3px rgba(0, 0, 0, 0.4);
  &::after {
    content: "";
    width: 11px;
    height: 11px;
    border-radius: 50%;
    background: linear-gradient(#e4e4e4, #f6f6f6);
  }
`;

function ScreenshotEditor() {
  return (
    <Phone $bg="#303030">
      <SettingsPage backdrop />
      <Shade>
        <EditTop>
          <Arrow color="#d0d0d0" size={18} w={2.8} />
          <EditTools>
            <svg width="22" height="23" viewBox="0 0 22 23" fill="none" stroke="#c2c2c2" strokeWidth="2.200">
              <path d="M1 5V3q0-2 2-2h1.500M17.500 1H19q2 0 2 2v2M21 18v2q0 2-2 2h-1.500M4.500 22H3q-2 0-2-2v-2M2 11.500h18" />
            </svg>
            <svg width="23" height="22" viewBox="0 0 23 22" fill="none" stroke="#c2c2c2" strokeWidth="2.200">
              <path d="M9.500 3.500H1.100v17.400h18.800V13" /><path d="M15 0l8 6.200-8 6.300V9c-3 0-5 1-6.500 4C8.500 7.500 11 4 15 3.500z" fill="#c2c2c2" stroke="none" />
            </svg>
            <Done>
              <svg width="20" height="15" viewBox="0 0 20 15" fill="none" stroke="#fff" strokeWidth="3"><path d="M1 7l6 6L19 1" /></svg>
            </Done>
          </EditTools>
        </EditTop>
        <EditBottom>
          <EditButton>滚动截屏</EditButton>
          <EditButton>套手机框</EditButton>
          <EditButton>涂鸦</EditButton>
        </EditBottom>
      </Shade>
      <Crop>
        <CropView><SettingsPage zoom={0.75} /></CropView>
        <Corner $v="top" $h="left" />
        <Corner $v="top" $h="right" />
        <Corner $v="bottom" $h="left" />
        <Corner $v="bottom" $h="right" />
        <Handle $x="50%" $y="0" />
        <Handle $x="0" $y="50%" />
        <Handle $x="100%" $y="50%" />
        <Handle $x="50%" $y="100%" />
      </Crop>
    </Phone>
  );
}

/* ---------- panel three: hearing accessibility ---------- */

const Content = styled.div`
  flex: 1;
  padding: 0 16px;
  display: flex;
  flex-direction: column;
  background: #f0f0f0;
`;
const SectionTitle = styled.h3`
  margin: 22px 0 8px 23.500px;
  font-size: 17.300px;
  line-height: 24px;
  height: 23px;
  font-weight: 500;
  color: #777;
`;
const Note = styled.p`
  margin: ${(p) => p.$top}px -10px 0 23.500px;
  font-size: 17.400px;
  line-height: 20.600px;
  color: #8b8b93;
  white-space: nowrap;
`;
const Spacer = styled.div`
  height: ${(p) => p.$h}px;
  flex: none;
`;
const Caption = styled.div`
  width: 479px;
  height: 154px;
  margin: 0 21px;
  flex: none;
  border-radius: 10px;
  overflow: hidden;
  display: flex;
  flex-direction: column;
  background: #35373e;
  box-shadow: 0 2px 7px rgba(0, 0, 0, 0.3);
`;
const CaptionBar = styled.div`
  height: 52px;
  padding: 0 11px 0 10px;
  display: flex;
  align-items: center;
  justify-content: space-between;
`;
const RoundKey = styled.span`
  width: 31px;
  height: 31px;
  border-radius: 50%;
  display: grid;
  place-items: center;
  background: #2e3036;
  ${(p) => p.$ring && css`border: 1.500px solid #a82b30;`}
`;
const Grip = styled.span`
  width: 21px;
  height: 7px;
  margin-bottom: 18px;
  border-top: 2px solid #51535a;
  border-bottom: 2px solid #51535a;
`;
const CaptionText = styled.div`
  flex: 1;
  padding: 12px 20px;
  font-size: 17.900px;
  line-height: 26px;
  color: #a7a8ac;
  background: linear-gradient(#292a2f 0, #2d2e33 10%, #35363d 60%, #43434c 100%);
`;
const Bubble = styled.div`
  width: 49px;
  height: 49px;
  margin: 17px auto 0;
  flex: none;
  border-radius: 50%;
  display: grid;
  place-items: center;
  background: #f9f9f9;
  border: 2px solid #fff;
  box-shadow: 0 3px 8px rgba(0, 0, 0, 0.2);
`;
const Credit = styled.footer`
  margin-top: 70px;
  display: flex;
  align-items: center;
  justify-content: center;
  gap: 3px;
  font-size: 17.400px;
  line-height: 28px;
  color: #85858b;
`;

function Hearing() {
  return (
    <Phone $bg="#fff">
      <StatusBar time="3:57 PM" line weak />
      <Head>
        <Arrow color="#8b8b8b" w={2.5} />
        <HeadTitle>听觉无障碍 beta</HeadTitle>
      </Head>
      <Content>
        <SectionTitle>实时字幕呼出方式</SectionTitle>
        <Card>
          <Row>下拉快捷开关设置<Value><Chevron /></Value></Row>
          <Row>双击快捷键<Toggle on /></Row>
        </Card>
        <Note $top={6.5}>
          <Zh>开启后，双击快捷键或设置下拉快捷键设置可以呼出实时字幕</Zh><br />
          <Zh>悬浮窗，可将机内或外部声音实时转译为字幕</Zh>
        </Note>
        <Note $top={9}><Zh>呼出实时字幕后，原“大爆炸炸声音”功能将无法使用</Zh></Note>
        <Spacer $h={18.5} />
        <Card><Row>快捷短语<Value><Chevron /></Value></Row></Card>
        <Note $top={6}>
          <Zh>使用 Smartisan 输入法，可直接点击 Smartisan 输入法的快捷</Zh><br />
          <Zh>短语按钮使用；使用其他输入法，在需要输入文字的地方长按，</Zh><br />
          <Zh>然后点击“快捷短语”按钮，即可使用</Zh>
        </Note>
        <Spacer $h={37.2} />
        <Card><Row>扬声器声音选择<Value>女音<Chevron /></Value></Row></Card>
        <Spacer $h={188.3} />
        <Caption>
          <CaptionBar>
            <RoundKey $ring>
              <svg width="12" height="17" viewBox="0 0 12 17" fill="#c6292e"><rect x="3" y="0" width="6" height="11" rx="3" /><path d="M.8 7v2a5.200 5.200 0 0 0 10.400 0V7" fill="none" stroke="#c6292e" strokeWidth="1.500" /><path d="M4.500 14h3L6 17z" /></svg>
            </RoundKey>
            <Grip />
            <RoundKey>
              <svg width="10" height="10" viewBox="0 0 10 10" stroke="#a0a1a5" strokeWidth="1.900"><path d="M.8.8l8.400 8.400M9.200.8L.8 9.200" /></svg>
            </RoundKey>
          </CaptionBar>
          <CaptionText>正在识别系统声音</CaptionText>
        </Caption>
        <Bubble>
          <svg width="18" height="18" viewBox="0 0 18 18" fill="none" stroke="#989898" strokeWidth="1.500">
            <path d="M10 0c0 2.500-.5 4-2.500 6.500L9 8v2.500l1.500.5-1 2 .5 2.500h7" strokeWidth="1.700" /><path d="M13 4.500l1 1" />
            <path d="M6.500 9.500q-1.500 2 0 4.500M4.300 8.500Q2 11.500 4.300 15M2 8q-3 4 0 8.500" strokeWidth="1.100" />
          </svg>
        </Bubble>
        <Credit>
          <svg width="16" height="21" viewBox="0 0 16 21" fill="none" stroke="#606060" strokeWidth="2.400" strokeLinecap="round">
            <path d="M14.500 6.500C14 .5 6 0 2.800 4 .3 8 3.500 11 4.200 14c.5 5 4.800 7 8 4.500" /><path d="M9 8.500l5 3.200-5 3z" fill="#606060" stroke="none" />
          </svg>
          由讯飞听见提供技术支持
        </Credit>
      </Content>
    </Phone>
  );
}

export default function App() {
  return (
    <>
      <Global />
      <Defs />
      <Board>
        <OneStep />
        <ScreenshotEditor />
        <Hearing />
      </Board>
    </>
  );
}
